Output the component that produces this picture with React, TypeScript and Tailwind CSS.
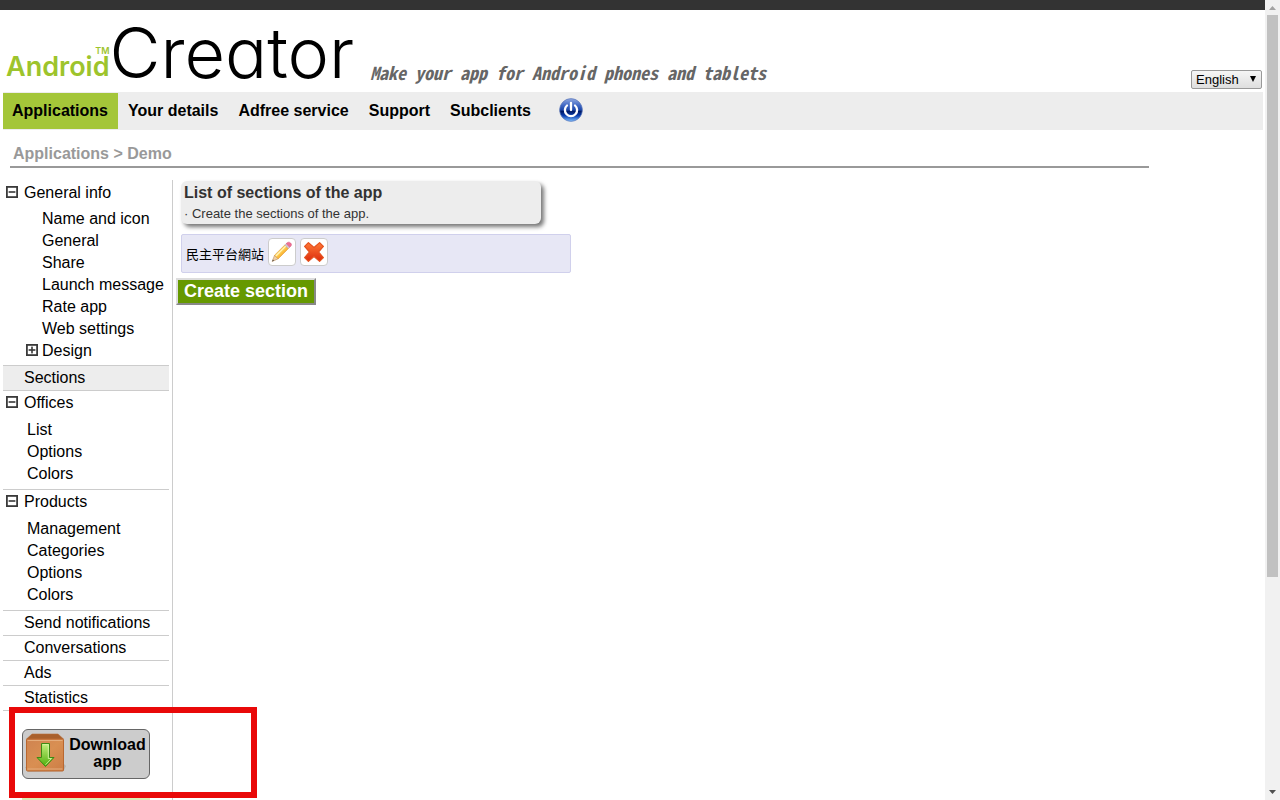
import { useState } from "react";

type Group = {
  label: string;
  items: { label: string; expandable?: boolean }[];
};

const navItems = ["Your details", "Adfree service", "Support", "Subclients"];

const generalItems: Group["items"] = [
  { label: "Name and icon" },
  { label: "General" },
  { label: "Share" },
  { label: "Launch message" },
  { label: "Rate app" },
  { label: "Web settings" },
  { label: "Design", expandable: true },
];

const groups: Group[] = [
  { label: "Offices", items: [{ label: "List" }, { label: "Options" }, { label: "Colors" }] },
  {
    label: "Products",
    items: [{ label: "Management" }, { label: "Categories" }, { label: "Options" }, { label: "Colors" }],
  },
];

const plainItems = ["Send notifications", "Conversations", "Ads", "Statistics"];

function ToggleIcon({ plus = false }: { plus?: boolean }) {
  return (
    <svg className="mb-[2px] shrink-0" width="12" height="12" viewBox="0 0 12 12" aria-hidden="true">
      <rect x="0.900" y="0.900" width="10.200" height="10.200" fill="#fff" stroke="#3a3a3a" strokeWidth="1.800" />
      <rect x="2.600" y="5.200" width="6.800" height="1.600" fill="#3a3a3a" />
      {plus && <rect x="5.200" y="2.600" width="1.600" height="6.800" fill="#3a3a3a" />}
    </svg>
  );
}

function PowerIcon() {
  return (
    <svg width="24" height="24" viewBox="0 0 24 24" aria-hidden="true">
      <defs>
        <linearGradient id="powerBody" x1="0" y1="0" x2="0" y2="1">
          <stop offset="0" stopColor="#8fa8e0" />
          <stop offset="0.3" stopColor="#4068c4" />
          <stop offset="0.5" stopColor="#1b46a8" />
          <stop offset="0.56" stopColor="#001a66" />
          <stop offset="0.75" stopColor="#0b3fb0" />
          <stop offset="1" stopColor="#7fc0ff" />
        </linearGradient>
      </defs>
      <circle cx="12" cy="12" r="11.4" fill="url(#powerBody)" stroke="#5c77b8" strokeWidth="0.7" />
      <path d="M8 7.500A6.100 6.100 0 1 0 16 7.500" fill="none" stroke="#fff" strokeWidth="2.3" strokeLinecap="round" />
      <path d="M12 5v7" stroke="#fff" strokeWidth="2.3" strokeLinecap="round" />
    </svg>
  );
}

function PencilIcon() {
  return (
    <svg width="22" height="22" viewBox="0 0 22 22" aria-hidden="true">
      <defs>
        <linearGradient id="pencilBody" x1="0" y1="0" x2="1" y2="1">
          <stop offset="0.2" stopColor="#ffe98c" />
          <stop offset="0.5" stopColor="#ffc94a" />
          <stop offset="0.8" stopColor="#ee8f12" />
        </linearGradient>
      </defs>
      <path d="M1.200 20.400 3.600 14.200 7.200 17.800Z" fill="#efcfa4" stroke="#b98a57" strokeWidth="0.6" />
      <path d="M1.200 20.400 1.900 18.600 3 19.700Z" fill="#444" />
      <path d="M3.600 14.200 13.800 4 17.400 7.600 7.200 17.800Z" fill="url(#pencilBody)" stroke="#dd9428" strokeWidth="0.6" />
      <path d="M4.900 15 15 4.900" stroke="#fff4bc" strokeWidth="1.3" />
      <path d="M13.800 4 15.200 2.600 18.800 6.200 17.400 7.600Z" fill="#d4c6d0" stroke="#b0a2ac" strokeWidth="0.5" />
      <path d="M15.200 2.600C16.800.9 18.200.7 19.600 2 21 3.400 20.700 4.600 18.800 6.200Z" fill="#ee6f93" stroke="#d44f78" strokeWidth="0.5" />
    </svg>
  );
}

function DeleteIcon() {
  return (
    <svg width="22" height="22" viewBox="0 0 22 22" aria-hidden="true">
      <defs>
        <linearGradient id="deleteBody" x1="0" y1="0" x2="0" y2="1">
          <stop offset="0" stopColor="#ff7a36" />
          <stop offset="1" stopColor="#dc2a0c" />
        </linearGradient>
      </defs>
      <path
        d="M5.400 1.600 11 6.500 16.600 1.600 20.400 5.400 15.500 11 20.400 16.600 16.600 20.400 11 15.500 5.400 20.400 1.600 16.600 6.500 11 1.600 5.400Z"
        fill="url(#deleteBody)"
        stroke="#e5521f"
        strokeWidth="1.2"
        strokeLinejoin="round"
      />
    </svg>
  );
}

function BoxIcon() {
  return (
    <svg className="shrink-0" width="42" height="42" viewBox="0 0 42 42" aria-hidden="true">
      <defs>
        <linearGradient id="boxFront" x1="0" y1="0" x2="1" y2="1">
          <stop offset="0" stopColor="#cf8350" />
          <stop offset="0.5" stopColor="#d98f52" />
          <stop offset="1" stopColor="#cc7d45" />
        </linearGradient>
        <linearGradient id="boxArrow" x1="0" y1="0" x2="0" y2="1">
          <stop offset="0" stopColor="#c3ef7c" />
          <stop offset="1" stopColor="#4fae0c" />
        </linearGradient>
      </defs>
      <path d="M38 30 41 33 38.500 38 3 39 0 34Z" fill="#b5b2ae" />
      <path d="M7 1H33L38.500 6H1.500Z" fill="#a9602c" stroke="#b96f3b" strokeWidth="0.6" />
      <rect x="1.500" y="6" width="37" height="32" rx="1" fill="url(#boxFront)" stroke="#b9672f" />
      <path d="M2.500 7.500H37.500M2.500 36H37.500" stroke="#e5ad7c" />
      <path d="M16.500 10.500H24.500V24.500H29L20.500 33.500 12 24.500H16.500Z" fill="url(#boxArrow)" stroke="#3e8a14" strokeLinejoin="round" />
      <path d="M17.700 11.700H23.300V25.500H26.500L20.500 31.800" fill="none" stroke="#dcf7ae" strokeWidth="0.8" />
    </svg>
  );
}

function Logo() {
  return (
    <a href="#home" className="flex items-end font-['Inter',sans-serif] whitespace-nowrap [font-feature-settings:'cv11','ss03']">
      <span className="flex flex-col items-end pb-[13px] font-semibold text-[#9dc42c]">
        <span className="text-[9px] leading-[9px]">TM</span>
        <span className="text-[27px] leading-6">Android</span>
      </span>
      <span className="pb-px text-[70px] leading-[76px] font-light text-black">Creator</span>
    </a>
  );
}

function Scrollbar() {
  return (
    <div aria-hidden="true" className="flex w-[15px] shrink-0 flex-col items-center bg-[#f1f1f1]">
      <svg width="15" height="15" viewBox="0 0 15 15">
        <path d="M4 10 7.500 6 11 10Z" fill="#a3a3a3" />
      </svg>
      <div className="flex w-[11px] grow flex-col">
        <div className="h-[73%] bg-[#c1c1c1]" />
      </div>
      <svg width="15" height="15" viewBox="0 0 15 15">
        <path d="M4 5H11L7.500 9Z" fill="#505050" />
      </svg>
    </div>
  );
}

function Sidebar() {
  return (
    <aside className="relative w-[170px] shrink-0 border-r border-[#ccc] pr-[3px] text-base">
      <div className="flex h-[25px] items-center gap-[6px] pl-[3px]">
        <ToggleIcon />
        <a href="#general-info">General info</a>
      </div>
      <ul className="pt-[3px] pb-[3px]">
        {generalItems.map((item) => (
          <li key={item.label} className="flex h-[22px] items-center gap-1 pl-[23px]">
            <span className="w-3">{item.expandable && <ToggleIcon plus />}</span>
            <a href="#general" className="whitespace-nowrap">{item.label}</a>
          </li>
        ))}
      </ul>
      <div className="flex h-[26px] items-center border-y border-[#ccc] bg-[#ededed] pl-[21px]">
        <a href="#sections">Sections</a>
      </div>
      {groups.map((group) => (
        <div key={group.label} className="border-b border-[#ccc] pb-1">
          <div className="flex h-6 items-center gap-[6px] pl-[3px]">
            <ToggleIcon />
            <a href="#group">{group.label}</a>
          </div>
          <ul className="pt-1">
            {group.items.map((item) => (
              <li key={item.label} className="flex h-[22px] items-center pl-6">
                <a href="#item">{item.label}</a>
              </li>
            ))}
          </ul>
        </div>
      ))}
      <ul>
        {plainItems.map((item) => (
          <li key={item} className="flex h-[25px] items-center border-b border-[#ccc] pl-[21px]">
            <a href="#item">{item}</a>
          </li>
        ))}
      </ul>
      <div className="relative flex flex-col gap-[19px] pt-[18px] pl-[19px]">
        <button
          type="button"
          className="flex h-[50px] w-32 items-center rounded-md border border-[#666] bg-[#ccc] pl-[2px] text-base leading-[17px] font-bold text-black"
        >
          <BoxIcon />
          <span className="grow pr-px pb-[2px] text-center">Download app</span>
        </button>
        <div className="h-[50px] w-32 bg-[#dcecb4]" />
        <div className="pointer-events-none absolute -top-1 left-[6px] h-[91px] w-[248px] border-6 border-[#e90909]" />
      </div>
    </aside>
  );
}

export default function App() {
  const [language, setLanguage] = useState("English");

  return (
    <div className="flex h-screen overflow-hidden bg-white font-['Liberation_Sans','Noto_Sans_CJK_TC',sans-serif] text-black">
      <div className="flex min-w-0 grow flex-col">
        <div className="h-[10px] shrink-0 bg-[#333]" />
        <header className="flex h-[82px] shrink-0 items-end pr-[3px] pl-[6px]">
          <Logo />
          <p className="ml-4 pb-2 font-['Noto_Sans_Mono_CJK_SC','Liberation_Mono',monospace] text-lg leading-6 font-bold whitespace-nowrap text-[#666] italic">
            Make your app for Android phones and tablets
          </p>
          <div className="relative mb-[3px] ml-auto">
            <select
              aria-label="Language"
              value={language}
              onChange={(event) => setLanguage(event.target.value)}
              className="block h-[19px] w-[71px] appearance-none rounded-xs border border-[#999] bg-linear-to-b from-[#f6f6f6] to-[#dedede] pl-1 text-[13px] leading-4 text-black"
            >
              <option>English</option>
              <option>Español</option>
            </select>
            <svg className="pointer-events-none absolute top-[6px] right-[6px]" width="6" height="6" viewBox="0 0 6 6" aria-hidden="true">
              <path d="M0 0H6L3 6Z" fill="#000" />
            </svg>
          </div>
        </header>
        <nav className="mr-[2px] ml-[3px] flex h-[38px] shrink-0 items-center bg-[#ededed] text-base font-bold">
          <a href="#applications" className="flex h-9 items-center bg-[#a4c639] pr-[10px] pl-[9px]">
            Applications
          </a>
          {navItems.map((item) => (
            <a key={item} href="#nav" className="px-[10px] whitespace-nowrap">
              {item}
            </a>
          ))}
          <a href="#logout" aria-label="Log out" className="mb-[2px] ml-[18px]">
            <PowerIcon />
          </a>
        </nav>
        <div className="ml-[10px] w-9/10 shrink-0 border-b-2 border-[#999] pt-[13px] pb-px pl-[3px] text-base leading-[22px] font-bold text-[#999]">
          Applications &gt; Demo
        </div>
        <div className="flex min-h-0 grow pt-3 pl-[3px]">
          <Sidebar />
          <main className="flex flex-col items-start pt-px pl-[3px]">
            <section className="ml-[5px] w-[360px] rounded-md bg-[#ededed] px-[3px] pt-px text-[#333] shadow-[3px_3px_4px_#777]">
              <h1 className="text-base leading-[22px] font-bold">List of sections of the app</h1>
              <p className="text-[13px] leading-5">· Create the sections of the app.</p>
            </section>
            <div className="mt-[10px] ml-[5px] flex h-[39px] w-[390px] items-center gap-1 rounded-xs border border-[#d0d0ec] bg-[#e7e7f5] pb-1 pl-1">
              <span className="pt-[6px] text-[13px]">民主平台網站</span>
              <button type="button" aria-label="Edit section" className="flex size-7 items-center justify-center rounded-sm border border-[#ccc] bg-white">
                <PencilIcon />
              </button>
              <button type="button" aria-label="Delete section" className="flex size-7 items-center justify-center rounded-sm border border-[#ccc] bg-white">
                <DeleteIcon />
              </button>
            </div>
            <button
              type="button"
              className="mt-[5px] flex h-[27px] items-center border-2 border-t-[#ddd] border-r-[#888] border-b-[#888] border-l-[#ddd] bg-[#690] px-[6px] pb-[2px] text-lg leading-5 font-bold text-white"
            >
              Create section
            </button>
          </main>
        </div>
      </div>
      <Scrollbar />
    </div>
  );
}
